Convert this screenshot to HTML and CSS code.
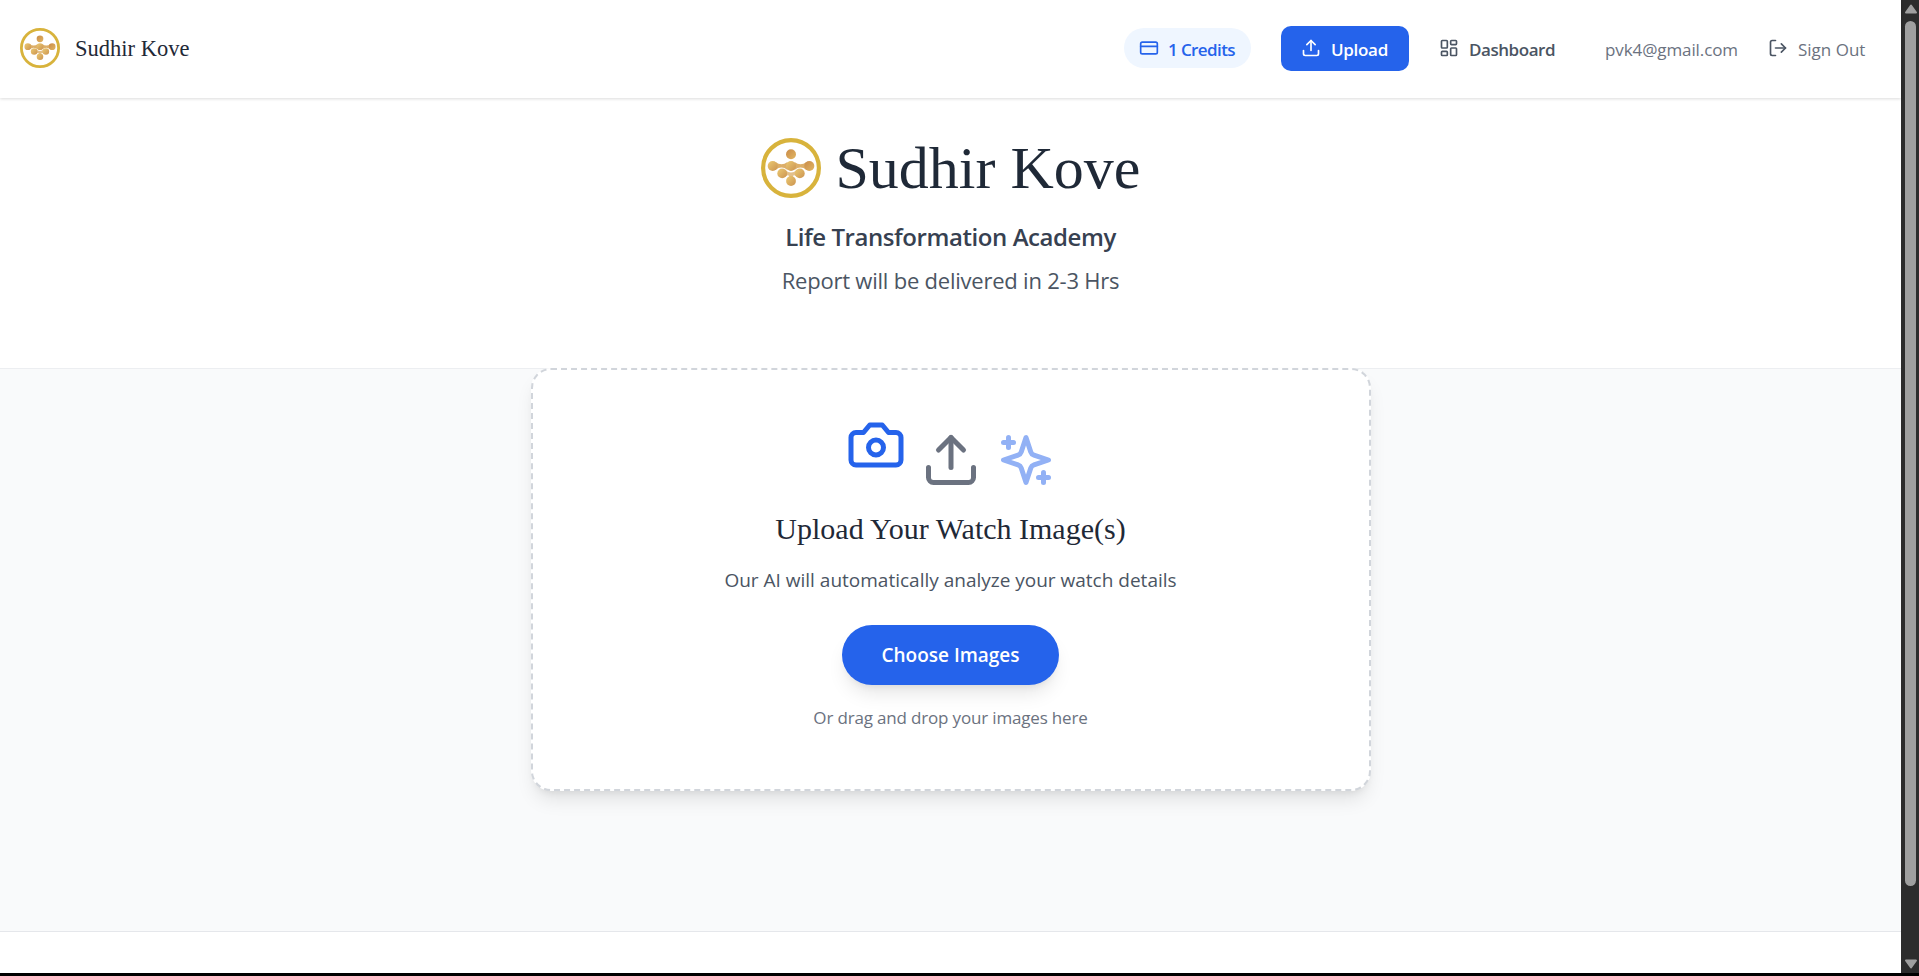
FILE: index.html
```html
<!DOCTYPE html>
<html lang="en">
<head>
<meta charset="utf-8">
<title>Sudhir Kove</title>
<link rel="stylesheet" href="styles.css">
</head>
<body>
<svg class="defs" aria-hidden="true">
  <defs>
    <linearGradient id="gold" x1="0" y1="0" x2="1" y2="1"><stop offset="0" stop-color="#ecca72"/><stop offset="1" stop-color="#cb9350"/></linearGradient>
    <linearGradient id="gold-deep" x1="0" y1="0" x2="1" y2="1"><stop offset="0" stop-color="#c98a48"/><stop offset="1" stop-color="#e2b763"/></linearGradient>
    <symbol id="logo" viewBox="0 0 60 60">
      <circle cx="30" cy="30" r="27.9" fill="#fff" stroke="#d8b33c" stroke-width="4.2"/>
      <path fill="#dcae68" d="M14.500 24Q20.500 28.600 26.500 24L26.500 32Q20.500 27.200 14.500 32ZM33.500 24Q39.500 28.600 45.500 24L45.500 32Q39.500 27.200 33.500 32Z"/>
      <path fill="#e3c08a" d="M24 31.500Q26.500 34.500 30 34.600Q33.500 34.500 36 31.500L36.500 39Q32 35.500 31.500 39.500L28.500 39.500Q28 35.500 23.500 39Z"/>
      <circle cx="30" cy="16.300" r="5" fill="url(#gold-deep)"/>
      <g fill="url(#gold)">
        <circle cx="11.700" cy="28" r="5"/>
        <circle cx="30" cy="28" r="5"/>
        <circle cx="21.200" cy="35.400" r="4.900"/>
        <circle cx="38.800" cy="35.400" r="4.900"/>
        <circle cx="30" cy="43" r="4.900"/>
      </g>
      <circle cx="48.300" cy="28" r="5" fill="url(#gold-deep)"/>
    </symbol>
    <symbol id="upload" viewBox="0 0 24 24"><path d="M12 3v12"/><path d="m17 8-5-5-5 5"/><path d="M21 15v4a2 2 0 0 1-2 2H5a2 2 0 0 1-2-2v-4"/></symbol>
  </defs>
</svg>
<div class="window">
  <div class="page">
    <nav class="nav">
      <div class="brand">
        <svg class="brand-logo"><use href="#logo"/></svg>
        <span class="brand-name">Sudhir Kove</span>
      </div>
      <div class="nav-links">
        <div class="credits">
          <svg class="icon" viewBox="0 0 24 24"><rect width="20" height="14" x="2" y="5" rx="2"/><path d="M2 10h20"/></svg>
          <span class="label t-credits">1 Credits</span>
        </div>
        <a class="upload-link"><svg class="icon"><use href="#upload"/></svg><span class="label t-upload">Upload</span></a>
        <a class="dash-link">
          <svg class="icon" viewBox="0 0 24 24"><rect width="7" height="9" x="3" y="3" rx="1"/><rect width="7" height="5" x="14" y="3" rx="1"/><rect width="7" height="9" x="14" y="12" rx="1"/><rect width="7" height="5" x="3" y="16" rx="1"/></svg>
          <span class="label t-dash">Dashboard</span>
        </a>
        <span class="label email">pvk4@gmail.com</span>
        <a class="signout">
          <svg class="icon" viewBox="0 0 24 24"><path d="M9 21H5a2 2 0 0 1-2-2V5a2 2 0 0 1 2-2h4"/><path d="m16 17 5-5-5-5"/><path d="M21 12H9"/></svg>
          <span class="label">Sign Out</span>
        </a>
      </div>
    </nav>
    <header class="hero">
      <div class="hero-title">
        <svg class="hero-logo"><use href="#logo"/></svg>
        <h1>Sudhir Kove</h1>
      </div>
      <p class="academy">Life Transformation Academy</p>
      <p class="delivery">Report will be delivered in 2-3 Hrs</p>
    </header>
    <main class="main">
      <section class="dropzone">
        <div class="big-icons">
          <svg class="icon camera" viewBox="0 0 24 24"><path d="M14.500 4h-5L7 7H4a2 2 0 0 0-2 2v9a2 2 0 0 0 2 2h16a2 2 0 0 0 2-2V9a2 2 0 0 0-2-2h-3l-2.500-3z"/><circle cx="12" cy="13" r="3"/></svg>
          <svg class="icon arrow"><use href="#upload"/></svg>
          <svg class="icon sparkles" viewBox="0 0 24 24"><path d="m12 3-1.912 5.813a2 2 0 0 1-1.275 1.275L3 12l5.813 1.912a2 2 0 0 1 1.275 1.275L12 21l1.912-5.813a2 2 0 0 1 1.275-1.275L21 12l-5.813-1.912a2 2 0 0 1-1.275-1.275L12 3Z"/><path d="M5 3v4"/><path d="M19 17v4"/><path d="M3 5h4"/><path d="M17 19h4"/></svg>
        </div>
        <h2>Upload Your Watch Image(s)</h2>
        <p class="analyze">Our AI will automatically analyze your watch details</p>
        <button class="choose">Choose Images</button>
        <p class="drag">Or drag and drop your images here</p>
      </section>
    </main>
    <footer class="footer"></footer>
  </div>
  <div class="scrollbar">
    <svg class="scroll-arrow" viewBox="0 0 14 10"><path d="M7 1.500 12 8.500H2Z"/></svg>
    <div class="thumb"></div>
    <svg class="scroll-arrow" viewBox="0 0 14 10"><path d="M7 8.500 12 1.500H2Z"/></svg>
  </div>
</div>
</body>
</html>
```
FILE: styles.css
```css
* { box-sizing: border-box; margin: 0; padding: 0; }
body { background: #000; height: 976px; overflow: hidden; font-family: "Open Sans", "Noto Sans", sans-serif; }
.defs { position: absolute; width: 0; height: 0; }
.window { display: flex; height: 973px; }
.page { width: 1901px; display: flex; flex-direction: column; background: #fff; }

.icon { width: 20px; height: 20px; flex: none; fill: none; stroke: currentColor; stroke-width: 2; stroke-linecap: round; stroke-linejoin: round; }

.nav { flex: none; height: 98px; padding: 0 34px 2px 20px; display: flex; align-items: center; justify-content: space-between; background: #fff; box-shadow: 0 1px 3px rgba(0,0,0,.14); z-index: 1; }
.brand { display: flex; align-items: center; gap: 15px; }
.brand-logo { width: 40px; height: 40px; }
.brand-name { font: 22.5px/35px "Liberation Serif", serif; color: #1f2937; }
.nav-links { display: flex; align-items: center; font-size: 17px; line-height: 25px; white-space: nowrap; }
.nav-links a, .credits { display: flex; align-items: center; gap: 10px; }
.label { padding-top: 2px; }
.credits { width: 127px; height: 40px; padding-left: 15px; border-radius: 20px; background: #eff6ff; color: #2563eb; font-weight: 600; margin-right: 30px; }
.t-credits { letter-spacing: -.6px; margin-left: -1px; }
.upload-link { width: 128px; height: 45px; padding-left: 20px; border-radius: 10px; background: #2563eb; color: #fff; font-weight: 600; margin-right: 30px; }
.t-upload { letter-spacing: -.3px; }
.dash-link { width: 166px; color: #4b5563; font-weight: 600; }
.t-dash { letter-spacing: -.45px; }
.email { width: 163px; color: #6b7280; letter-spacing: -.1px; }
.signout { width: 99px; color: #6b7280; }
.signout .icon { color: #4b5563; }

.hero { flex: none; height: 270px; padding-top: 40px; display: flex; flex-direction: column; align-items: center; }
.hero-title { display: flex; align-items: center; gap: 15px; height: 60px; }
.hero-logo { width: 60px; height: 60px; }
h1 { font: 60px/60px "Liberation Serif", serif; color: #1f2937; }
.academy { margin-top: 21px; font-size: 24px; line-height: 35px; font-weight: 600; letter-spacing: -.43px; color: #374151; }
.delivery { margin-top: 9px; font-size: 22px; line-height: 35px; letter-spacing: -.22px; color: #4b5563; }

.main { flex: none; height: 563px; border-top: 1px solid #eceef1; background: #f9fafb; display: flex; justify-content: center; align-items: flex-start; }
.dropzone { width: 840px; height: 423px; margin-top: -1px; padding-top: 60px; border: 2px dashed #d1d5db; border-radius: 20px; background: #fff; box-shadow: 0 12px 19px -4px rgba(0,0,0,.1), 0 5px 8px -5px rgba(0,0,0,.1); display: flex; flex-direction: column; align-items: center; }
.big-icons { display: flex; gap: 15px; margin-top: -.5px; }
.big-icons .icon { width: 60px; height: 60px; }
.camera { color: #2563eb; margin-top: -15px; }
.arrow { color: #6b7280; }
.sparkles { color: #92b1f5; }
h2 { margin-top: 19px; font: 30px/40px "Liberation Serif", serif; color: #1f2937; }
.analyze { margin-top: 16px; font-size: 19px; line-height: 30px; color: #4b5563; }
.choose { margin-top: 30px; width: 217px; height: 60px; border: 0; border-radius: 30px; background: #2563eb; color: #fff; font: 600 19px/30px "Open Sans", sans-serif; box-shadow: 0 12px 19px -4px rgba(0,0,0,.1), 0 5px 8px -5px rgba(0,0,0,.1); }
.drag { margin-top: 20.5px; font-size: 17px; line-height: 25px; letter-spacing: -.17px; color: #6b7280; }

.footer { flex: 1; border-top: 1px solid #e5e7eb; background: #fff; }

.scrollbar { width: 18px; background: #2c2c2c; display: flex; flex-direction: column; align-items: center; padding: 4px 0 4px 1px; }
.scroll-arrow { width: 14px; height: 10px; fill: #9f9f9f; stroke: #9f9f9f; stroke-width: 2; stroke-linejoin: round; }
.thumb { width: 11px; height: 865px; margin: 7px 0 auto; border-radius: 6px; background: #9f9f9f; }
```
